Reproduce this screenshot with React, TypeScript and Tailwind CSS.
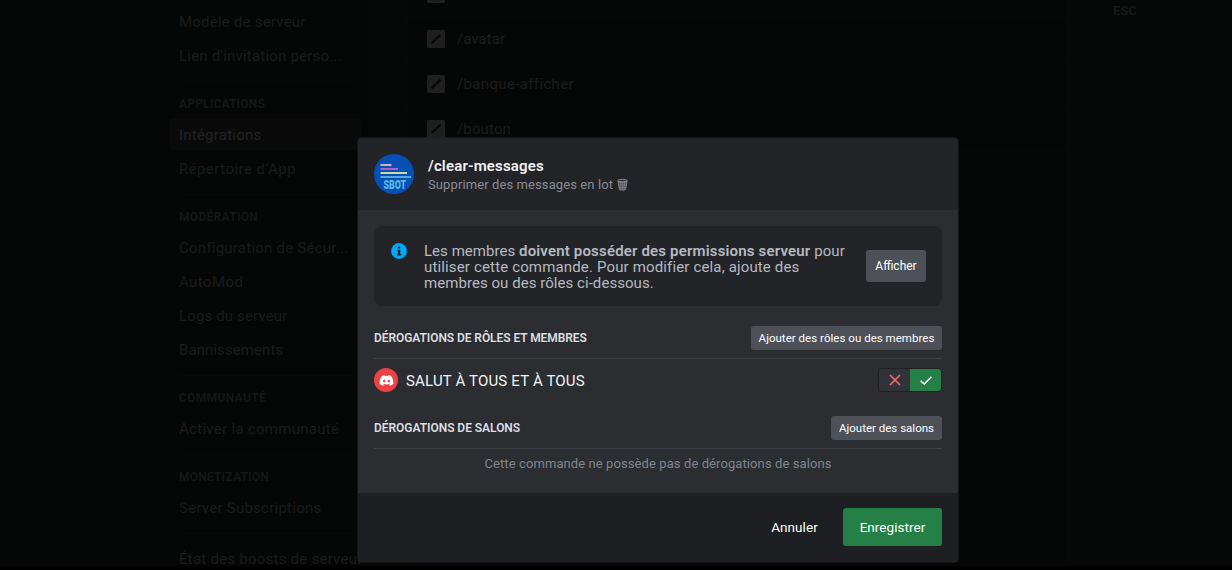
import React from "react";
import { FaDiscord } from "react-icons/fa";

function NavItem({ label, className = "", active = false }: { label: string; className?: string; active?: boolean }) {
  return (
    <div
      className={`mb-0.5 flex h-8 shrink-0 items-center rounded px-2.5 pt-0.5 text-[15px] font-[450] whitespace-nowrap ${
        active ? "bg-[#0a0a0a] text-[#222324]" : "text-[#1a1b1b]"
      } ${className}`}
    >
      {label}
    </div>
  );
}

function NavHeader({ label, className = "" }: { label: string; className?: string }) {
  return (
    <div className={`mb-0.5 flex h-[26px] shrink-0 items-center px-2.5 pt-0.5 text-[12px] font-bold text-[#151617] ${className}`}>
      {label}
    </div>
  );
}

function NavDivider() {
  return <div className="mx-2.5 my-2 h-px shrink-0 bg-[#080909]" />;
}

function CommandRow({ name, className = "" }: { name: string; className?: string }) {
  return (
    <div className="flex h-[45px] items-center border-b border-[#070909] pl-5">
      <svg className="mr-3 size-[18px]" viewBox="0 0 18 18">
        <rect width="18" height="18" rx="1.5" fill="#1f1f1f" />
        <path d="M4.7 13.3 13.3 4.7" stroke="#050606" strokeWidth="2" />
      </svg>
      <span className={`text-[15px] text-[#1c1d1d] ${className}`}>{name}</span>
    </div>
  );
}

function BotAvatar() {
  return (
    <svg className="size-10 shrink-0" viewBox="0 0 40 40">
      <circle cx="20" cy="20" r="20" fill="#0450b4" />
      <g strokeWidth="1.8">
        <path d="M6.500 11H17.500" stroke="#c9b3cf" />
        <path d="M6.500 15H24" stroke="#b45fc6" />
        <path d="M6.500 19H33" stroke="#cfd99a" />
        <path d="M6.500 23H37" stroke="#52a8e0" />
      </g>
      <text
        x="9.5"
        y="35"
        textLength="22.5"
        lengthAdjust="spacingAndGlyphs"
        fontFamily="Roboto, sans-serif"
        fontSize="13.5"
        fontWeight="900"
        fill="#5cbbe0"
      >
        SBOT
      </text>
    </svg>
  );
}

function TrashIcon() {
  return (
    <svg className="ml-1 h-3 w-[11px]" viewBox="0 0 11 12" fill="none" stroke="#949ba4">
      <ellipse cx="5.5" cy="1.7" rx="4.9" ry="1.2" strokeWidth="0.9" />
      <path d="M1 2.5 2.3 10.6Q5.5 12 8.7 10.6L10 2.5Q5.500 4 1 2.500Z" fill="#949ba4" fillOpacity="0.4" strokeWidth="0.7" />
      <path d="M3.300 3.500 4 11M5.500 3.500V11.300M7.700 3.500 7 11M1.500 6H9.500M2 8.500H9" strokeWidth="0.4" />
    </svg>
  );
}

function InfoIcon() {
  return (
    <svg className="mt-px size-4 shrink-0" viewBox="0 0 16 16">
      <circle cx="8" cy="8" r="7.900" fill="#00a8fc" />
      <rect x="6.900" y="3.400" width="2.300" height="2.200" rx="0.500" fill="#232428" />
      <path d="M6 6.700H9.200V11H10.200V12.400H5.900V11H6.900V8.100H6Z" fill="#232428" />
    </svg>
  );
}

export default function App() {
  return (
    <div className="relative h-[570px] w-full overflow-hidden bg-black font-['Roboto',sans-serif]">
      <div className="flex h-[566px] overflow-hidden bg-[#050706]">
        <nav className="flex w-[361px] shrink-0 flex-col overflow-hidden pt-[5px] pl-[169px]">
          <NavItem label="Modèle de serveur" className="tracking-[0.22px]" />
          <NavItem label="Lien d'invitation perso..." className="tracking-[0.2px]" />
          <NavDivider />
          <NavHeader label="APPLICATIONS" className="tracking-[0.18px]" />
          <NavItem label="Intégrations" active className="tracking-[0.22px]" />
          <NavItem label="Répertoire d’App" className="tracking-[0.45px]" />
          <NavDivider />
          <NavHeader label="MODÉRATION" className="tracking-[0.3px]" />
          <NavItem label="Configuration de Sécur..." className="tracking-[0.24px]" />
          <NavItem label="AutoMod" className="tracking-[0.42px]" />
          <NavItem label="Logs du serveur" className="tracking-[0.14px]" />
          <NavItem label="Bannissements" className="tracking-[0.08px]" />
          <NavDivider />
          <NavHeader label="COMMUNAUTÉ" className="tracking-[0.33px]" />
          <NavItem label="Activer la communauté" className="tracking-[0.29px]" />
          <NavDivider />
          <NavHeader label="MONETIZATION" className="tracking-[0.21px]" />
          <NavItem label="Server Subscriptions" className="tracking-[0.25px]" />
          <NavDivider />
          <NavItem label="État des boosts de serveur" className="tracking-[0.24px]" />
        </nav>
        <main className="ml-[6px] flex flex-1 bg-[#060807] pl-[39px]">
          <section className="-mt-7 h-[594px] w-[662px] border-r border-l border-[#090a0a] bg-[#050706]">
            <CommandRow name="/" />
            <CommandRow name="/avatar" className="tracking-[0.05px]" />
            <CommandRow name="/banque-afficher" className="tracking-[0.35px]" />
            <CommandRow name="/bouton" className="tracking-[0.14px]" />
          </section>
          <span className="ml-[45px] pt-0.5 text-[13px] leading-[17px] font-semibold text-[#191a1a]">ESC</span>
        </main>
      </div>

      <div className="absolute inset-0 pt-[138px] pl-[358px]">
        <div role="dialog" className="flex h-[424px] w-[600px] flex-col overflow-hidden rounded bg-[#2b2d31] shadow-[0_0_0_1px_rgba(30,31,34,0.6)]">
          <header className="flex h-[72px] shrink-0 items-center bg-[#232428] px-4">
            <BotAvatar />
            <div className="ml-3.5 pt-0.5">
              <h1 className="text-[15px] leading-5 font-semibold tracking-[0.17px] text-[#f2f3f5]">/clear-messages</h1>
              <p className="flex items-center text-[13px] leading-[18px] tracking-[0.1px] text-[#878d96]">
                Supprimer des messages en lot
                <TrashIcon />
              </p>
            </div>
          </header>

          <div className="flex h-[283px] shrink-0 flex-col px-4 pt-4">
            <div className="flex h-20 shrink-0 items-center rounded-lg bg-[#232428] px-4">
              <div className="ml-px flex flex-1 self-start pt-4">
                <InfoIcon />
                <p className="ml-[17px] pt-px text-[15px] leading-4 text-[#b5bac1]">
                  <span className="tracking-[0.04px]">Les membres </span>
                  <strong className="font-semibold tracking-[0.17px]">doivent posséder des permissions serveur</strong>
                  <span className="tracking-[0.1px]"> pour</span>
                  <br />
                  <span className="tracking-[0.15px]">utiliser cette commande. Pour modifier cela, ajoute des</span>
                  <br />
                  <span className="tracking-[0.05px]">membres ou des rôles ci-dessous.</span>
                </p>
              </div>
              <button className="h-8 w-[60px] rounded-[3px] bg-[#4e5058] text-[12px] font-[450] text-white">Afficher</button>
            </div>

            <div className="mt-5 flex h-6 shrink-0 items-center justify-between">
              <h2 className="text-[12px] font-semibold tracking-[-0.07px] text-[#dbdee1]">DÉROGATIONS DE RÔLES ET MEMBRES</h2>
              <button className="h-6 w-[191px] rounded-[3px] bg-[#4e5058] pt-px text-[11.5px] font-[450] tracking-[0.03px] whitespace-nowrap text-white">
                Ajouter des rôles ou des membres
              </button>
            </div>
            <div className="mt-2 mb-[3px] flex h-[43px] shrink-0 items-center border-t border-[#3c3e43]">
              <div className="flex size-6 items-center justify-center rounded-full bg-[#ed4245]">
                <FaDiscord className="size-[15px] text-white" />
              </div>
              <span className="ml-2 flex-1 pt-0.5 text-[15px] tracking-[0.17px] text-[#f2f3f5]">SALUT À TOUS ET À TOUS</span>
              <div className="flex h-6 w-16 overflow-hidden rounded border border-[#1e1f22]">
                <div className="flex w-[31px] items-center justify-center bg-[#313338]">
                  <svg className="size-3" viewBox="0 0 12 12" fill="none" stroke="#f0686d" strokeWidth="1.7">
                    <path d="M1 1 11 11M11 1 1 11" />
                  </svg>
                </div>
                <div className="flex w-[31px] items-center justify-center bg-[#248046]">
                  <svg className="h-[9px] w-3" viewBox="0 0 12 9" fill="none" stroke="#fff" strokeWidth="1.5">
                    <path d="M.6 4.700 4.200 8 11.500.700" />
                  </svg>
                </div>
              </div>
            </div>

            <div className="mt-3 flex h-6 shrink-0 items-center justify-between">
              <h2 className="text-[12px] font-semibold tracking-[-0.04px] text-[#dbdee1]">DÉROGATIONS DE SALONS</h2>
              <button className="h-6 w-[111px] rounded-[3px] bg-[#4e5058] pt-px text-[11.5px] font-[450] whitespace-nowrap text-white">
                Ajouter des salons
              </button>
            </div>
            <p className="mt-2 shrink-0 border-t border-[#3c3e43] pt-[5px] text-center text-[13px] leading-5 tracking-[0.09px] text-[#80858e]">
              Cette commande ne possède pas de dérogations de salons
            </p>
          </div>

          <footer className="flex h-[69px] shrink-0 items-start justify-end bg-[#1e1f22] px-4 pt-[15px]">
            <button className="h-[38px] w-[97px] text-[13.5px] font-[450] tracking-[0.05px] text-white">Annuler</button>
            <button className="h-[38px] w-[99px] rounded-[3px] bg-[#248046] text-[13.5px] font-[450] tracking-[0.05px] text-white">
              Enregistrer
            </button>
          </footer>
        </div>
      </div>
    </div>
  );
}
